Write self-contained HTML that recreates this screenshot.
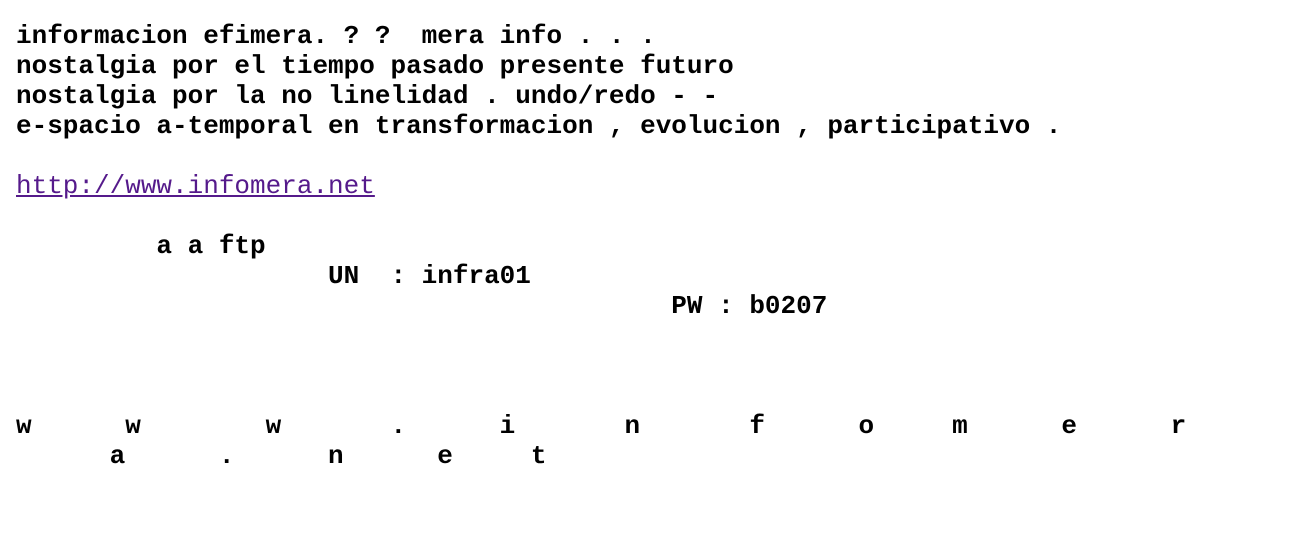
<!DOCTYPE html>
<html><head><meta charset="utf-8"><style>
html,body{margin:0;padding:0;background:#fff;width:1314px;height:542px;overflow:hidden}
pre{margin:0;padding:21px 0 0 16px;font-family:"Liberation Mono","DejaVu Sans Mono",monospace;font-size:26px;line-height:30px;color:#000;font-weight:bold}
a{color:#551a8b;text-decoration:underline;font-weight:normal}
</style></head><body><pre>informacion efimera. ? ?  mera info . . .
nostalgia por el tiempo pasado presente futuro
nostalgia por la no linelidad . undo/redo - -
e-spacio a-temporal en transformacion , evolucion , participativo .

<a>http://www.infomera.net</a>

         a a ftp
                    UN  : infra01
                                          PW : b0207



w      w        w       .      i       n       f      o     m      e      r
      a      .      n      e     t
</pre></body></html>
